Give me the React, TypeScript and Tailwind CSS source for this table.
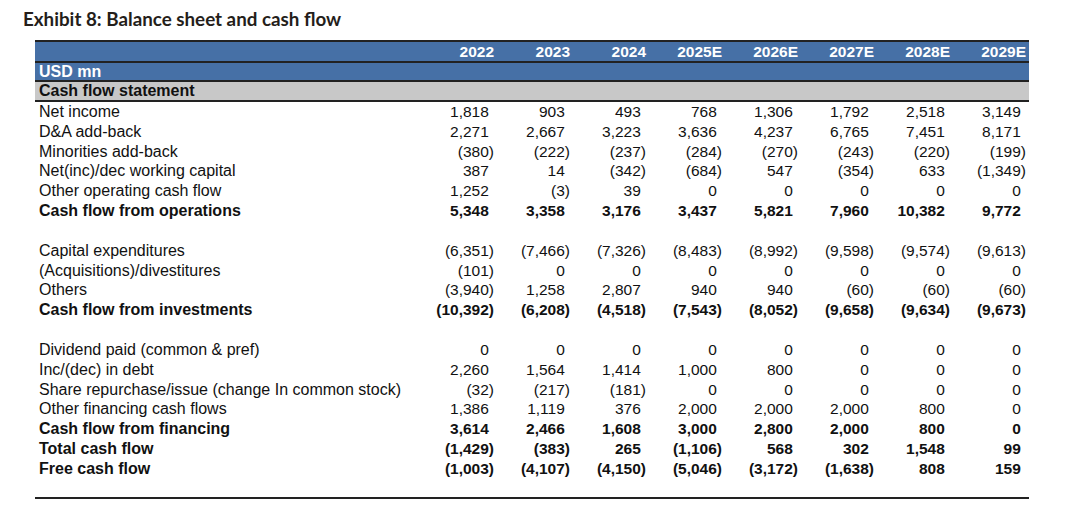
type Row = { label: string; values: string[]; bold?: boolean } | null

const years = ['2022', '2023', '2024', '2025E', '2026E', '2027E', '2028E', '2029E']

const rows: Row[] = [
  { label: 'Net income', values: ['1,818', '903', '493', '768', '1,306', '1,792', '2,518', '3,149'] },
  { label: 'D&A add-back', values: ['2,271', '2,667', '3,223', '3,636', '4,237', '6,765', '7,451', '8,171'] },
  { label: 'Minorities add-back', values: ['(380)', '(222)', '(237)', '(284)', '(270)', '(243)', '(220)', '(199)'] },
  { label: 'Net(inc)/dec working capital', values: ['387', '14', '(342)', '(684)', '547', '(354)', '633', '(1,349)'] },
  { label: 'Other operating cash flow', values: ['1,252', '(3)', '39', '0', '0', '0', '0', '0'] },
  { label: 'Cash flow from operations', bold: true, values: ['5,348', '3,358', '3,176', '3,437', '5,821', '7,960', '10,382', '9,772'] },
  null,
  { label: 'Capital expenditures', values: ['(6,351)', '(7,466)', '(7,326)', '(8,483)', '(8,992)', '(9,598)', '(9,574)', '(9,613)'] },
  { label: '(Acquisitions)/divestitures', values: ['(101)', '0', '0', '0', '0', '0', '0', '0'] },
  { label: 'Others', values: ['(3,940)', '1,258', '2,807', '940', '940', '(60)', '(60)', '(60)'] },
  { label: 'Cash flow from investments', bold: true, values: ['(10,392)', '(6,208)', '(4,518)', '(7,543)', '(8,052)', '(9,658)', '(9,634)', '(9,673)'] },
  null,
  { label: 'Dividend paid (common & pref)', values: ['0', '0', '0', '0', '0', '0', '0', '0'] },
  { label: 'Inc/(dec) in debt', values: ['2,260', '1,564', '1,414', '1,000', '800', '0', '0', '0'] },
  { label: 'Share repurchase/issue (change In common stock)', values: ['(32)', '(217)', '(181)', '0', '0', '0', '0', '0'] },
  { label: 'Other financing cash flows', values: ['1,386', '1,119', '376', '2,000', '2,000', '2,000', '800', '0'] },
  { label: 'Cash flow from financing', bold: true, values: ['3,614', '2,466', '1,608', '3,000', '2,800', '2,000', '800', '0'] },
  { label: 'Total cash flow', bold: true, values: ['(1,429)', '(383)', '265', '(1,106)', '568', '302', '1,548', '99'] },
  { label: 'Free cash flow', bold: true, values: ['(1,003)', '(4,107)', '(4,150)', '(5,046)', '(3,172)', '(1,638)', '808', '159'] },
]

// accounting format: positives keep the room of a closing paren
function Num({ v }: { v: string }) {
  const neg = v.startsWith('(')
  return (
    <div className="pr-[3px] text-right">
      {v}
      {!neg && <span className="invisible">)</span>}
    </div>
  )
}

export default function App() {
  return (
    <div className="h-[510px] w-[1080px] bg-white pl-[23px] pt-[7px]">
      <h1 className="font-['Lato',sans-serif] text-[18.8px] font-bold leading-[24px] text-[#251e1a]">
        Exhibit 8: Balance sheet and cash flow
      </h1>

      <div className="ml-[12px] mt-[9px] w-[994px] font-['Liberation_Sans',Arial,sans-serif] text-[15.5px] text-[#111]">
        <div className="grid h-[23px] grid-cols-[386px_repeat(8,76px)] items-center border-y-2 border-[#222] bg-[#4670a6] font-bold leading-[19px] text-white">
          <div />
          {years.map((y) => (
            <div key={y} className="pr-[3px] text-right">
              {y}
            </div>
          ))}
        </div>
        <div className="flex h-[19px] items-center border-b-2 border-[#222] bg-[#4670a6] px-1 text-[16px] font-bold leading-[17px] text-white">
          USD mn
        </div>
        <div className="flex h-[20px] items-center border-b-2 border-[#222] bg-[#c8c8c8] px-1 text-[16px] font-bold leading-[18px]">
          Cash flow statement
        </div>

        <div>
          {rows.map((r, i) =>
            r ? (
              <div
                key={i}
                className={`grid h-[19.83px] grid-cols-[386px_repeat(8,76px)] items-center leading-[19.83px] ${
                  r.bold ? 'font-bold' : ''
                }`}
              >
                <div className="whitespace-nowrap px-1 text-[16px]">{r.label}</div>
                {r.values.map((v, j) => (
                  <Num key={j} v={v} />
                ))}
              </div>
            ) : (
              <div key={i} className="h-[19.83px]" />
            )
          )}
        </div>

        <div className="mt-[18px] border-t-2 border-[#222]" />
      </div>
    </div>
  )
}
